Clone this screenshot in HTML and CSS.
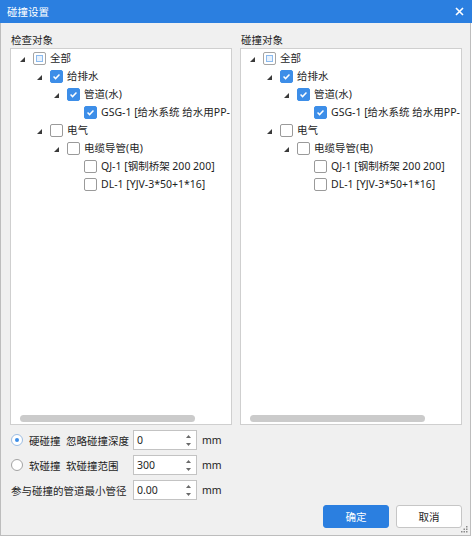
FILE: index.html
```html
<!DOCTYPE html>
<html lang="zh-CN">
<head>
    <meta charset="UTF-8">
    <title>碰撞设置</title>
    <link rel="stylesheet" href="styles.css">
</head>
<body>
    <div class="window">
        <div class="titlebar">
            <span class="title">碰撞设置</span>
            <svg class="close" width="9" height="9" viewBox="0 0 9 9"><path d="M1 1 L8 8 M8 1 L1 8" stroke="#fff" stroke-width="1.6"/></svg>
        </div>
        <div class="body">
            <div class="panels">
                <div class="panel">
                    <div class="panel-label">检查对象</div>
                    <div class="tree-box">
                        <ul class="tree">
                            <li class="node lv0"><i class="arrow"></i><span class="cb partial"><span></span></span><span class="text">全部</span></li>
                            <li class="node lv1"><i class="arrow"></i><span class="cb checked"><svg viewBox="0 0 13 13"><path d="M3 6.6 L5.4 9 L10 4.2" fill="none" stroke="#fff" stroke-width="1.7"/></svg></span><span class="text">给排水</span></li>
                            <li class="node lv2"><i class="arrow"></i><span class="cb checked"><svg viewBox="0 0 13 13"><path d="M3 6.6 L5.4 9 L10 4.2" fill="none" stroke="#fff" stroke-width="1.7"/></svg></span><span class="text">管道(水)</span></li>
                            <li class="node lv3"><i class="arrow leaf"></i><span class="cb checked"><svg viewBox="0 0 13 13"><path d="M3 6.6 L5.4 9 L10 4.2" fill="none" stroke="#fff" stroke-width="1.7"/></svg></span><span class="text">GSG-1 [给水系统 给水用PP-</span></li>
                            <li class="node lv1"><i class="arrow"></i><span class="cb"></span><span class="text">电气</span></li>
                            <li class="node lv2"><i class="arrow"></i><span class="cb"></span><span class="text">电缆导管(电)</span></li>
                            <li class="node lv3"><i class="arrow leaf"></i><span class="cb"></span><span class="text">QJ-1 [钢制桥架 200 200]</span></li>
                            <li class="node lv3"><i class="arrow leaf"></i><span class="cb"></span><span class="text">DL-1 [YJV-3*50+1*16]</span></li>
                        </ul>
                        <div class="hscroll"><div class="thumb"></div></div>
                    </div>
                </div>
                <div class="panel">
                    <div class="panel-label">碰撞对象</div>
                    <div class="tree-box">
                        <ul class="tree">
                            <li class="node lv0"><i class="arrow"></i><span class="cb partial"><span></span></span><span class="text">全部</span></li>
                            <li class="node lv1"><i class="arrow"></i><span class="cb checked"><svg viewBox="0 0 13 13"><path d="M3 6.6 L5.4 9 L10 4.2" fill="none" stroke="#fff" stroke-width="1.7"/></svg></span><span class="text">给排水</span></li>
                            <li class="node lv2"><i class="arrow"></i><span class="cb checked"><svg viewBox="0 0 13 13"><path d="M3 6.6 L5.4 9 L10 4.2" fill="none" stroke="#fff" stroke-width="1.7"/></svg></span><span class="text">管道(水)</span></li>
                            <li class="node lv3"><i class="arrow leaf"></i><span class="cb checked"><svg viewBox="0 0 13 13"><path d="M3 6.6 L5.4 9 L10 4.2" fill="none" stroke="#fff" stroke-width="1.7"/></svg></span><span class="text">GSG-1 [给水系统 给水用PP-</span></li>
                            <li class="node lv1"><i class="arrow"></i><span class="cb"></span><span class="text">电气</span></li>
                            <li class="node lv2"><i class="arrow"></i><span class="cb"></span><span class="text">电缆导管(电)</span></li>
                            <li class="node lv3"><i class="arrow leaf"></i><span class="cb"></span><span class="text">QJ-1 [钢制桥架 200 200]</span></li>
                            <li class="node lv3"><i class="arrow leaf"></i><span class="cb"></span><span class="text">DL-1 [YJV-3*50+1*16]</span></li>
                        </ul>
                        <div class="hscroll"><div class="thumb"></div></div>
                    </div>
                </div>
            </div>

            <div class="options">
                <label class="opt-label"><span class="radio on"></span>硬碰撞&nbsp;&nbsp;忽略碰撞深度</label>
                <div class="spin"><span>0</span><span class="spin-arrows"><svg width="5" height="3" viewBox="0 0 5 3"><path d="M0 3 L2.5 0 L5 3Z" fill="#6a6a6a"/></svg><svg width="5" height="3" viewBox="0 0 5 3"><path d="M0 0 L2.5 3 L5 0Z" fill="#6a6a6a"/></svg></span></div>
                <span class="unit">mm</span>

                <label class="opt-label"><span class="radio"></span>软碰撞&nbsp;&nbsp;软碰撞范围</label>
                <div class="spin"><span>300</span><span class="spin-arrows"><svg width="5" height="3" viewBox="0 0 5 3"><path d="M0 3 L2.5 0 L5 3Z" fill="#6a6a6a"/></svg><svg width="5" height="3" viewBox="0 0 5 3"><path d="M0 0 L2.5 3 L5 0Z" fill="#6a6a6a"/></svg></span></div>
                <span class="unit">mm</span>

                <label class="opt-label plain">参与碰撞的管道最小管径</label>
                <div class="spin"><span>0.00</span><span class="spin-arrows"><svg width="5" height="3" viewBox="0 0 5 3"><path d="M0 3 L2.5 0 L5 3Z" fill="#6a6a6a"/></svg><svg width="5" height="3" viewBox="0 0 5 3"><path d="M0 0 L2.5 3 L5 0Z" fill="#6a6a6a"/></svg></span></div>
                <span class="unit">mm</span>
            </div>

            <div class="actions">
                <button class="btn btn-primary">确定</button>
                <button class="btn">取消</button>
            </div>

            <svg class="grip" width="7" height="7" viewBox="0 0 7 7">
                <rect x="5" y="0" width="1.5" height="1.5" fill="#8a8a8a"/>
                <rect x="2.5" y="2.5" width="1.5" height="1.5" fill="#8a8a8a"/>
                <rect x="5" y="2.5" width="1.5" height="1.5" fill="#8a8a8a"/>
                <rect x="0" y="5" width="1.5" height="1.5" fill="#8a8a8a"/>
                <rect x="2.5" y="5" width="1.5" height="1.5" fill="#8a8a8a"/>
                <rect x="5" y="5" width="1.5" height="1.5" fill="#8a8a8a"/>
            </svg>
        </div>
    </div>
</body>
</html>
```

FILE: styles.css
```css
body {
    margin: 0;
    background: #ffffff;
    font-family: "Noto Sans", "Noto Sans CJK SC", sans-serif;
    font-size: 10.5px;
    color: #1e1e1e;
}
.window {
    width: 472px;
    height: 536px;
    display: flex;
    flex-direction: column;
}
.titlebar {
    height: 23px;
    flex: none;
    background: #2b7fe0;
    display: flex;
    align-items: center;
    justify-content: space-between;
    padding: 0 8px 0 7px;
    box-sizing: border-box;
}
.title {
    color: #ffffff;
    font-size: 10.5px;
}
.close {
    display: block;
}
.body {
    position: relative;
    flex: 1;
    width: 471px;
    box-sizing: border-box;
    background: #f0f0f0;
    border: 1px solid #bdbdbd;
    border-top: none;
    padding: 10px 8px 7px 9px;
    display: flex;
    flex-direction: column;
}
.panels {
    display: grid;
    grid-template-columns: 222px 222px;
    column-gap: 8px;
}
.panel-label {
    height: 15px;
    line-height: 14px;
    padding-left: 1px;
}
.tree-box {
    height: 377px;
    box-sizing: border-box;
    background: #ffffff;
    border: 1px solid #cfcfcf;
    display: flex;
    flex-direction: column;
    overflow: hidden;
}
.tree {
    list-style: none;
    margin: 0;
    padding: 0;
    flex: 1;
}
.node {
    height: 18px;
    display: flex;
    align-items: center;
    white-space: nowrap;
}
.lv0 { padding-left: 9px; }
.lv1 { padding-left: 26px; }
.lv2 { padding-left: 43px; }
.lv3 { padding-left: 60px; }
.arrow {
    width: 0;
    height: 0;
    border-left: 5px solid transparent;
    border-bottom: 5px solid #3a3a3a;
    margin-right: 8px;
    margin-top: 2px;
}
.arrow.leaf {
    visibility: hidden;
}
.cb {
    flex: none;
    width: 13px;
    height: 13px;
    box-sizing: border-box;
    border: 1px solid #9a9a9a;
    border-radius: 2px;
    background: #ffffff;
    margin-right: 4px;
    display: flex;
    align-items: center;
    justify-content: center;
}
.cb.checked {
    border-color: #3d8ee8;
    background: #3d8ee8;
}
.cb svg {
    width: 13px;
    height: 13px;
    display: block;
}
.cb.partial {
    border-color: #a5a5a5;
}
.cb.partial span {
    width: 7px;
    height: 7px;
    box-sizing: border-box;
    border: 1px solid #8cbbef;
    background: #e8f1fb;
}
.text {
    line-height: 18px;
}
.hscroll {
    height: 9px;
    padding-left: 9px;
}
.thumb {
    width: 175px;
    height: 7px;
    border-radius: 4px;
    background: #cbcbcb;
}
.options {
    margin-top: 5px;
    display: grid;
    grid-template-columns: 118px 64px auto;
    grid-auto-rows: 20px;
    column-gap: 5px;
    row-gap: 5px;
    align-items: center;
}
.opt-label {
    display: flex;
    align-items: center;
    padding-left: 1px;
    white-space: nowrap;
}
.radio {
    flex: none;
    width: 12px;
    height: 12px;
    box-sizing: border-box;
    border: 1px solid #a3a3a3;
    border-radius: 50%;
    background: #ffffff;
    margin-right: 6px;
    display: flex;
    align-items: center;
    justify-content: center;
}
.radio.on {
    border-color: #9cbde3;
}
.radio.on::after {
    content: "";
    width: 4px;
    height: 4px;
    border-radius: 50%;
    background: #3d8ee8;
}
.spin {
    height: 20px;
    box-sizing: border-box;
    border: 1px solid #c3c3c3;
    background: #ffffff;
    display: flex;
    align-items: center;
    justify-content: space-between;
    padding: 0 5px 0 3px;
}
.spin-arrows {
    display: flex;
    flex-direction: column;
    gap: 5px;
}
.spin-arrows svg {
    display: block;
}
.actions {
    margin-top: auto;
    display: flex;
    justify-content: flex-end;
    gap: 7px;
}
.btn {
    width: 66px;
    height: 23px;
    box-sizing: border-box;
    border: 1px solid #c6c6c6;
    border-radius: 3px;
    background: #ffffff;
    color: #1e1e1e;
    font-family: inherit;
    font-size: 10.5px;
    padding: 0;
}
.btn-primary {
    background: #2b7fe0;
    border-color: #2b7fe0;
    color: #ffffff;
}
.grip {
    position: absolute;
    right: 2px;
    bottom: 2px;
}
```
